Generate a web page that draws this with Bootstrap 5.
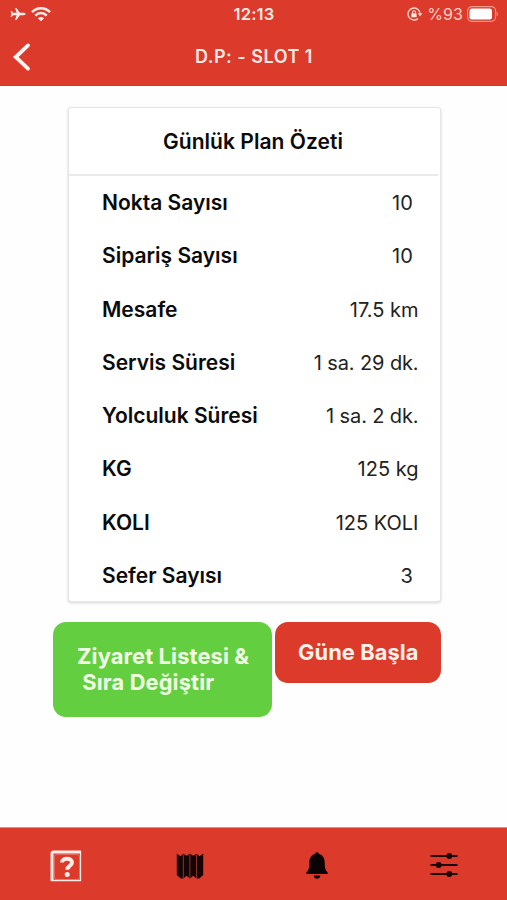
<!DOCTYPE html>
<html lang="tr">
<head>
<meta charset="utf-8">
<meta name="viewport" content="width=device-width, initial-scale=1">
<title>Günlük Plan Özeti</title>
<link href="https://cdn.jsdelivr.net/npm/bootstrap@5.3.0/dist/css/bootstrap.min.css" rel="stylesheet">
<style>
  :root { --brand: #dc3a2b; --go: #63ce3f; }
  body { font-family: Inter, "Liberation Sans", sans-serif; background: #fefefe; color: #0b0b0b; height: 900px; overflow: hidden; }
  svg { display: block; flex: none; }
  .top-area { background: var(--brand); height: 86px; border-bottom: 1px solid #c5402f; color: #ffe9e3; }
  .status-row { height: 28px; display: grid; grid-template-columns: 1fr auto 1fr; padding: 0 9px 0 10px; }
  .clock { font-size: 16.5px; font-weight: 600; line-height: 28px; letter-spacing: .2px; }
  .charge { font-size: 16px; line-height: 28px; color: #ffcfc6; letter-spacing: .1px; }
  .title-row { height: 57px; display: grid; grid-template-columns: 40px 1fr 40px; padding-left: 12px; padding-right: 11px; }
  .screen-title { font-size: 18px; font-weight: 600; line-height: 57px; letter-spacing: .5px; }
  .plan-card { width: 373px; height: 495px; margin: 21px 0 0 67.5px; border: 1px solid #e6e6e6; border-radius: 3px; box-shadow: 0 1px 3px rgba(0,0,0,.16); }
  .plan-head { height: 68px; margin: 0 2px 0 0; padding-top: 2px; border-bottom: 2px solid #eaeaea; font-size: 21px; font-weight: 600; letter-spacing: .05px; }
  .plan-item { height: 53.3px; padding: 0 21px 0 33.5px; font-size: 21px; line-height: 53px; }
  .plan-label { font-weight: 600; }
  .plan-value { font-size: 20px; color: #222; white-space: pre; line-height: 54.5px; }
  .plan-value.tight { letter-spacing: -.12px; }
  .actions { margin: 20px 0 0 53px; gap: 3px; }
  .act { border: 0; border-radius: 13px; color: #fff0e9; font-size: 21.8px; font-weight: 700; line-height: 26px; white-space: pre; text-align: left; padding: 0 24px; letter-spacing: .1px; }
  .act-list { background: var(--go); width: 219px; height: 94.5px; padding-right: 0; color: #f0ffe4; letter-spacing: .15px; }
  .act-start { background: var(--brand); width: 166px; height: 61px; padding: 0 20px 2px 23px; }
  .tabs { background: var(--brand); height: 73px; border-top: 1px solid #e98d83; }
  .tab { height: 76px; }
  .tab-help { padding-left: 5px; }
</style>
<script src="https://cdn.jsdelivr.net/npm/bootstrap@5.3.0/dist/js/bootstrap.bundle.min.js"></script>
</head>
<body class="d-flex flex-column">
<header class="top-area flex-shrink-0">
  <div class="status-row align-items-center">
    <div class="d-flex align-items-center">
      <svg width="16" height="14" viewBox="0 0 16 14" fill="#ffece7"><path d="M15.500 7c0 .8-1 1.200-2 1.200H10L6.400 13H5l1.600-4.800H3.200L1.700 10H.6l.8-3L.6 4h1.100l1.500 1.800h3.400L5 1h1.400L10 5.800h3.500c1 0 2 .4 2 1.200z"/></svg>
      <svg class="ms-1" width="22" height="16" viewBox="0 0 22 16" fill="none" stroke="#ffece7" stroke-width="2.500"><path d="M2 6.200C7 .8 15 .8 20 6.200M5.300 9.600c3.300-3.400 8.100-3.400 11.400 0"/><path d="M11 15.200 7.900 12.200c1.700-1.600 4.500-1.600 6.200 0z" fill="#ffece7" stroke="none"/></svg>
    </div>
    <div class="clock">12:13</div>
    <div class="d-flex align-items-center justify-content-end">
      <svg width="16" height="14" viewBox="0 0 16 14" fill="none" stroke="#ffd8d0" stroke-width="1.400"><path d="M10.900 11.600A6 6 0 1 1 13 7"/><path d="M10.700 6.300h4.800L13.100 9.300z" fill="#ffd8d0" stroke="none"/><rect x="4.400" y="6.300" width="5.200" height="4" rx=".6" fill="#ffe6e0" stroke="none"/><path d="M5.500 6.500V5.200a1.500 1.500 0 0 1 3 0v1.300" stroke-width="1.100"/></svg>
      <span class="charge ms-1">%93</span>
      <svg class="ms-1" width="31" height="16" viewBox="0 0 31 16"><rect x=".6" y=".6" width="28" height="14.800" rx="4.300" fill="none" stroke="#f09a8e" stroke-width="1.100"/><rect x="2.500" y="2.500" width="22.500" height="11" rx="2.500" fill="#fff"/><path d="M29.700 5.700c1.600.8 1.600 3.800 0 4.600z" fill="#f09a8e"/></svg>
    </div>
  </div>
  <div class="title-row align-items-center text-center">
    <svg width="20" height="30" viewBox="0 0 20 30" fill="none" stroke="#fff5f2" stroke-width="3.800" stroke-linecap="round"><path d="M16 3.400 3.700 15 16 26.600"/></svg>
    <div class="screen-title">D.P: - SLOT 1</div>
  </div>
</header>

<main class="flex-grow-1">
  <section class="plan-card bg-white">
    <div class="plan-head d-flex align-items-center justify-content-center"><span>Günlük Plan Özeti</span></div>
    <div class="plan-item d-flex justify-content-between"><span class="plan-label">Nokta Sayısı</span><span class="plan-value">10 </span></div>
    <div class="plan-item d-flex justify-content-between"><span class="plan-label">Sipariş Sayısı</span><span class="plan-value">10 </span></div>
    <div class="plan-item d-flex justify-content-between"><span class="plan-label">Mesafe</span><span class="plan-value">17.5 km</span></div>
    <div class="plan-item d-flex justify-content-between"><span class="plan-label">Servis Süresi</span><span class="plan-value tight">1 sa. 29 dk.</span></div>
    <div class="plan-item d-flex justify-content-between"><span class="plan-label">Yolculuk Süresi</span><span class="plan-value tight">1 sa. 2 dk.</span></div>
    <div class="plan-item d-flex justify-content-between"><span class="plan-label">KG</span><span class="plan-value">125 kg</span></div>
    <div class="plan-item d-flex justify-content-between"><span class="plan-label">KOLI</span><span class="plan-value">125 KOLI</span></div>
    <div class="plan-item d-flex justify-content-between"><span class="plan-label">Sefer Sayısı</span><span class="plan-value">3 </span></div>
  </section>
  <div class="actions d-flex align-items-start">
    <button type="button" class="act act-list">Ziyaret Listesi &amp;
 Sıra Değiştir</button>
    <button type="button" class="act act-start">Güne Başla</button>
  </div>
</main>

<nav class="tabs row g-0 flex-shrink-0">
  <div class="tab tab-help col-3 d-flex align-items-center justify-content-center">
    <svg width="32" height="32" viewBox="0 0 32 32" fill="none" stroke="#ffece7"><path d="M2 31V3.500Q2 2 3.500 2H31" stroke-width="3"/><path d="M30.500 1v29.500H1" stroke-width="1.300"/><rect x="4.500" y="4.500" width="25" height="25" rx="2.500" stroke-width=".6" stroke="#ea8a7e"/><path d="M12 12.600c0-5.200 10-5.200 10 0 0 3.600-4.800 3.200-4.800 7.200" stroke-width="4"/><circle cx="17.200" cy="24.600" r="2.500" fill="#ffece7" stroke="none"/></svg>
  </div>
  <div class="tab col-3 d-flex align-items-center justify-content-center">
    <svg width="28" height="26" viewBox="0 0 28 26"><path fill="#140403" d="M.8.600 4.500 3.300 7.300.800 10.500 2.800 13.900.800 17.300 2.800 20.600.800 23.500 3.300 27.200.600V22l-4 3.500h-2.600L17.300 22.800l-3.400 2.700-3.400-2.700-3.200 2.700H4.800L.8 22z"/><path d="M7.300 1.500v24M13.900 1.500v24M20.600 1.500v24" stroke="#a33b30" stroke-width=".9"/></svg>
  </div>
  <div class="tab col-3 d-flex align-items-center justify-content-center">
    <svg width="22" height="28" viewBox="0 0 22 28" fill="#0b0303"><path d="M11 .3c1.200 0 1.900.7 2.100 1.700 3.600 1 5.600 4 5.600 8.500 0 5.500.7 7.800 2.900 9.800V22H.4v-1.700c2.200-2 2.900-4.300 2.900-9.800C3.300 6 5.300 3 8.900 2c.2-1 .9-1.700 2.100-1.700zM7.700 23.400h6.600c-.3 4.300-6.300 4.300-6.600 0z"/></svg>
  </div>
  <div class="tab col-3 d-flex align-items-center justify-content-center">
    <svg width="28" height="26" viewBox="0 0 28 26" fill="#1d0705" stroke="#1d0705" stroke-width="2.200" stroke-linecap="round"><path d="M1.300 3h25.400M1.300 12h25.400M1.300 21h25.400"/><g stroke="none"><circle cx="19.300" cy="3" r="3"/><circle cx="8.700" cy="12" r="3"/><circle cx="19.300" cy="21" r="3"/></g></svg>
  </div>
</nav>
</body>
</html>
